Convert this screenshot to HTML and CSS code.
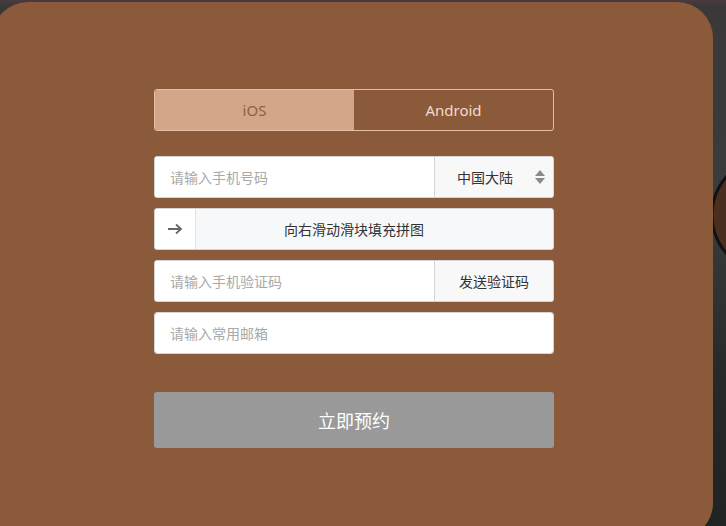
FILE: index.html
```html
<!DOCTYPE html>
<html lang="zh-CN">
  <head>
    <meta charset="UTF-8" />
    <title>预约</title>
    <link rel="stylesheet" href="styles.css">
  </head>
  <body>
    <div class="modal">
      <div class="form">
        <div class="tabs">
          <button class="tab active">iOS</button>
          <button class="tab">Android</button>
        </div>

        <div class="field">
          <input type="text" placeholder="请输入手机号码" />
          <div class="region">
            <span>中国大陆</span>
            <svg width="10" height="16" viewBox="0 0 10 16">
              <path d="M5 1 L10 7 L0 7 Z" fill="#8a8a8a" />
              <path d="M0 9 L10 9 L5 15 Z" fill="#8a8a8a" />
            </svg>
          </div>
        </div>

        <div class="slider">
          <div class="handle">
            <svg width="16" height="12" viewBox="0 0 16 12">
              <path d="M1 6 H14 M9 1.5 L14 6 L9 10.5" fill="none" stroke="#666" stroke-width="1.8" />
            </svg>
          </div>
          <span class="slider-text">向右滑动滑块填充拼图</span>
        </div>

        <div class="field">
          <input type="text" placeholder="请输入手机验证码" />
          <button class="send">发送验证码</button>
        </div>

        <div class="field">
          <input type="text" placeholder="请输入常用邮箱" />
        </div>

        <button class="submit">立即预约</button>
      </div>
    </div>
  </body>
</html>
```

FILE: styles.css
```css
body {
  margin: 0;
  height: 526px;
  overflow: hidden;
  font-family: "Noto Sans", "Noto Sans CJK SC", sans-serif;
  background:
    radial-gradient(circle at 770px 215px, #4a2e20 0 56px, #111 57px 59px, transparent 60px),
    linear-gradient(180deg, #4a3a3e 0, #3a3838 6px, #3b3c3c 40%, #262b2a 70%, #1f2322 100%);
}

.modal {
  margin: 2px 0 0 -8px;
  width: 721px;
  height: 537px;
  box-sizing: border-box;
  padding: 87px 0 0 162px;
  background-color: #8b5a3a;
  border-radius: 36px;
}

.form {
  width: 400px;
  display: flex;
  flex-direction: column;
}

.tabs {
  display: flex;
  height: 42px;
  border: 1px solid #e6bfa3;
  border-radius: 3px;
  overflow: hidden;
  box-sizing: border-box;
  margin-bottom: 25px;
}

.tab {
  flex: 1;
  border: none;
  background: none;
  font-family: inherit;
  font-size: 15px;
  color: #f4dccb;
  cursor: pointer;
}

.tab.active {
  background-color: #d3a68a;
  color: #8d6048;
}

.field {
  display: flex;
  height: 42px;
  box-sizing: border-box;
  background-color: #fff;
  border: 1px solid #d5d5d5;
  border-radius: 3px;
  overflow: hidden;
  margin-bottom: 10px;
}

.field input {
  flex: 1;
  min-width: 0;
  border: none;
  outline: none;
  padding: 0 15px;
  font-family: inherit;
  font-size: 14px;
  color: #333;
}

.field input::placeholder {
  color: #a9a9a9;
}

.region,
.send {
  width: 119px;
  box-sizing: border-box;
  background-color: #f8f8f8;
  border: none;
  border-left: 1px solid #d5d5d5;
  font-family: inherit;
  font-size: 14px;
  color: #333;
}

.region {
  display: flex;
  align-items: center;
  justify-content: space-between;
  padding: 0 8px 0 22px;
}

.send {
  cursor: pointer;
}

/* slide-to-verify bar */
.slider {
  position: relative;
  display: flex;
  align-items: center;
  height: 42px;
  box-sizing: border-box;
  background-color: #f7f8fa;
  border: 1px solid #d5d5d5;
  border-radius: 3px;
  margin-bottom: 10px;
}

.handle {
  width: 41px;
  height: 100%;
  background-color: #fff;
  border-right: 1px solid #e3e3e3;
  border-radius: 2px 0 0 2px;
  display: flex;
  align-items: center;
  justify-content: center;
  box-sizing: border-box;
}

.slider-text {
  position: absolute;
  left: 0;
  right: 0;
  text-align: center;
  font-size: 14px;
  color: #333;
  pointer-events: none;
}

.submit {
  margin-top: 28px;
  height: 56px;
  border: none;
  border-radius: 3px;
  background-color: #999;
  color: #fff;
  font-family: inherit;
  font-size: 18px;
  cursor: pointer;
}
```
